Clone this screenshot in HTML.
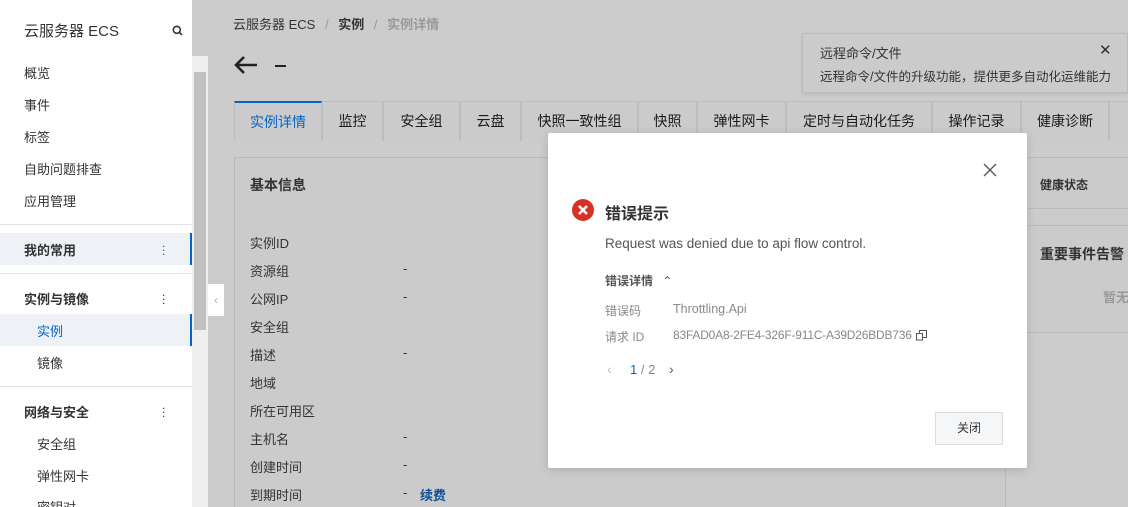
<!DOCTYPE html>
<html><head><meta charset="utf-8"><style>
*{margin:0;padding:0;box-sizing:border-box}
html,body{width:1128px;height:507px;overflow:hidden}
body{position:relative;font-family:"Liberation Sans","Noto Sans CJK SC",sans-serif;background:#cccccc;color:#333;font-size:13px;white-space:nowrap}
.abs{position:absolute}
.side{left:0;top:0;width:192px;height:507px;background:#fff}
.side .it{position:absolute;left:24px;font-size:13px;color:#333}
.track{left:192px;top:56px;width:16px;height:451px;background:#efefef}
.thumb{left:194px;top:72px;width:12px;height:258px;background:#c1c1c1}
.tab{position:absolute;top:101px;height:40px;border:1px solid #bdbdbd;border-bottom:none;line-height:38px;text-align:center;font-size:14px;color:#1a1a1a;background:#cbcbcb}
.card{border:1px solid #bbbbbb;background:#cbcbcb}
.lbl{position:absolute;left:250px;font-size:13px;color:#333}
.dash{position:absolute;left:403px;font-size:13px}
</style></head><body>
<div class="abs side">
 <div class="it" style="top:20px;font-size:15px">云服务器 ECS</div>
 <svg class="abs" style="left:172px;top:25px" width="11" height="11" viewBox="0 0 11 11"><circle cx="4.8" cy="4.8" r="3.5" fill="none" stroke="#333" stroke-width="1.6"/><path d="M7.3 7.3L10 10" stroke="#333" stroke-width="1.6"/></svg>
 <div class="it" style="top:63px">概览</div>
 <div class="it" style="top:95px">事件</div>
 <div class="it" style="top:127px">标签</div>
 <div class="it" style="top:159px">自助问题排查</div>
 <div class="it" style="top:191px">应用管理</div>
 <div class="abs" style="left:0;top:224px;width:192px;height:1px;background:#e5e5e5"></div>
 <div class="abs" style="left:0;top:233px;width:192px;height:32px;background:#eef1f6;border-right:2px solid #0064c8"></div>
 <div class="it" style="top:240px;font-weight:bold">我的常用</div>
 <div class="abs" style="left:162px;top:241px;color:#0064c8;font-size:12px;line-height:4px;width:2px">.<br>.<br>.</div>
 <div class="abs" style="left:0;top:273px;width:192px;height:1px;background:#e5e5e5"></div>
 <div class="it" style="top:289px;font-weight:bold">实例与镜像</div>
 <div class="abs" style="left:162px;top:290px;font-size:12px;line-height:4px">.<br>.<br>.</div>
 <div class="abs" style="left:0;top:314px;width:192px;height:32px;background:#eef1f6;border-right:2px solid #0064c8"></div>
 <div class="it" style="top:321px;left:37px;color:#0064c8">实例</div>
 <div class="it" style="top:353px;left:37px">镜像</div>
 <div class="abs" style="left:0;top:386px;width:192px;height:1px;background:#e5e5e5"></div>
 <div class="it" style="top:402px;font-weight:bold">网络与安全</div>
 <div class="abs" style="left:162px;top:403px;font-size:12px;line-height:4px">.<br>.<br>.</div>
 <div class="it" style="top:434px;left:37px">安全组</div>
 <div class="it" style="top:466px;left:37px">弹性网卡</div>
 <div class="it" style="top:497px;left:37px">密钥对</div>
</div>
<div class="abs track"></div>
<div class="abs thumb"></div>
<div class="abs" style="left:208px;top:284px;width:16px;height:32px;background:#fff;color:#aaa;font-size:12px;line-height:32px;text-align:center">‹</div>
<div class="abs" style="left:233px;top:14px;font-size:13px;color:#333">云服务器 ECS <span style="color:#999;margin:0 6px">/</span> <b>实例</b> <span style="color:#999;margin:0 6px">/</span> <b style="color:#999">实例详情</b></div>
<svg class="abs" style="left:233px;top:55px" width="26" height="20" viewBox="0 0 26 20"><path d="M24 10H3M11 2L3 10L11 18" fill="none" stroke="#222" stroke-width="2.6"/></svg>
<div class="abs" style="left:275px;top:65px;width:11px;height:1.5px;background:#222"></div>
<div class="abs" style="left:802px;top:33px;width:326px;height:60px;background:#cbcbcb;border:1px solid #bbb;box-shadow:0 1px 4px rgba(0,0,0,.1)"></div>
<div class="abs" style="left:820px;top:43px;font-size:13px">远程命令/文件</div>
<div class="abs" style="left:1099px;top:41px;font-size:15px">✕</div>
<div class="abs" style="left:820px;top:66px;font-size:12.5px">远程命令/文件的升级功能，提供更多自动化运维能力</div>
<div class="tab" style="left:234px;width:88px;color:#0064c8;border-top:2px solid #0064c8">实例详情</div>
<div class="tab" style="left:322px;width:61px">监控</div>
<div class="tab" style="left:383px;width:77px">安全组</div>
<div class="tab" style="left:460px;width:61px">云盘</div>
<div class="tab" style="left:521px;width:117px">快照一致性组</div>
<div class="tab" style="left:638px;width:59px">快照</div>
<div class="tab" style="left:697px;width:89px">弹性网卡</div>
<div class="tab" style="left:786px;width:146px">定时与自动化任务</div>
<div class="tab" style="left:932px;width:89px">操作记录</div>
<div class="tab" style="left:1021px;width:88px">健康诊断</div>
<div class="tab" style="left:1109px;width:40px"></div>
<div class="abs card" style="left:234px;top:157px;width:772px;height:360px"></div>
<div class="abs" style="left:250px;top:175px;font-size:14px;font-weight:bold">基本信息</div>
<div class="lbl" style="top:233px">实例ID</div>
<div class="lbl" style="top:261px">资源组</div><div class="dash" style="top:261px">-</div>
<div class="lbl" style="top:289px">公网IP</div><div class="dash" style="top:289px">-</div>
<div class="lbl" style="top:317px">安全组</div>
<div class="lbl" style="top:345px">描述</div><div class="dash" style="top:345px">-</div>
<div class="lbl" style="top:373px">地域</div>
<div class="lbl" style="top:401px">所在可用区</div>
<div class="lbl" style="top:429px">主机名</div><div class="dash" style="top:429px">-</div>
<div class="lbl" style="top:457px">创建时间</div><div class="dash" style="top:457px">-</div>
<div class="lbl" style="top:485px">到期时间</div><div class="dash" style="top:485px">-</div>
<div class="abs" style="left:420px;top:485px;color:#0a4d99;font-weight:bold">续费</div>
<div class="abs card" style="left:1008px;top:157px;width:130px;height:52px"></div>
<div class="abs" style="left:1040px;top:176px;font-size:12px;font-weight:bold">健康状态</div>
<div class="abs card" style="left:1008px;top:225px;width:130px;height:108px"></div>
<div class="abs" style="left:1040px;top:244px;font-size:14px;font-weight:bold">重要事件告警</div>
<div class="abs" style="left:1103px;top:287px;font-size:13px;color:#999;font-weight:bold">暂无</div>
<div class="abs" style="left:548px;top:133px;width:479px;height:335px;background:#fff;border-radius:2px;box-shadow:0 2px 10px rgba(0,0,0,.15)"></div>
<svg class="abs" style="left:983px;top:163px" width="14" height="14" viewBox="0 0 14 14"><path d="M1 1L13 13M13 1L1 13" stroke="#555" stroke-width="1.3"/></svg>
<svg class="abs" style="left:572px;top:199px" width="22" height="22" viewBox="0 0 22 22"><circle cx="11" cy="11" r="11" fill="#d93026"/><path d="M7 7L15 15M15 7L7 15" stroke="#fff" stroke-width="2.6"/></svg>
<div class="abs" style="left:605px;top:200px;font-size:16px;font-weight:bold;color:#333">错误提示</div>
<div class="abs" style="left:605px;top:236px;font-size:13.5px;color:#555">Request was denied due to api flow control.</div>
<div class="abs" style="left:605px;top:272px;font-size:12px;font-weight:bold;color:#555">错误详情 <span style="margin-left:6px;font-weight:normal">⌃</span></div>
<div class="abs" style="left:605px;top:302px;font-size:12px;color:#888">错误码</div>
<div class="abs" style="left:673px;top:302px;font-size:12.5px;color:#888">Throttling.Api</div>
<div class="abs" style="left:605px;top:328px;font-size:12px;color:#888">请求 ID</div>
<div class="abs" style="left:673px;top:328px;font-size:12px;letter-spacing:-0.2px;color:#888">83FAD0A8-2FE4-326F-911C-A39D26BDB736</div>
<svg class="abs" style="left:916px;top:330px" width="11" height="11" viewBox="0 0 11 11"><rect x="0.5" y="3.5" width="6" height="6.5" fill="#fff" stroke="#555"/><path d="M3.5 3.5V0.5H10.5V7.5H6.5" fill="none" stroke="#555"/></svg>
<div class="abs" style="left:607px;top:361px;color:#bbb;font-size:14px">‹</div>
<div class="abs" style="left:630px;top:362px;font-size:13px;color:#0064c8">1<span style="color:#888"> / 2</span></div>
<div class="abs" style="left:669px;top:361px;color:#555;font-size:14px">›</div>
<div class="abs" style="left:935px;top:412px;width:68px;height:33px;background:#f5f6f7;border:1px solid #dcdcdc;text-align:center;line-height:31px;font-size:12px;color:#333">关闭</div>
</body></html>
